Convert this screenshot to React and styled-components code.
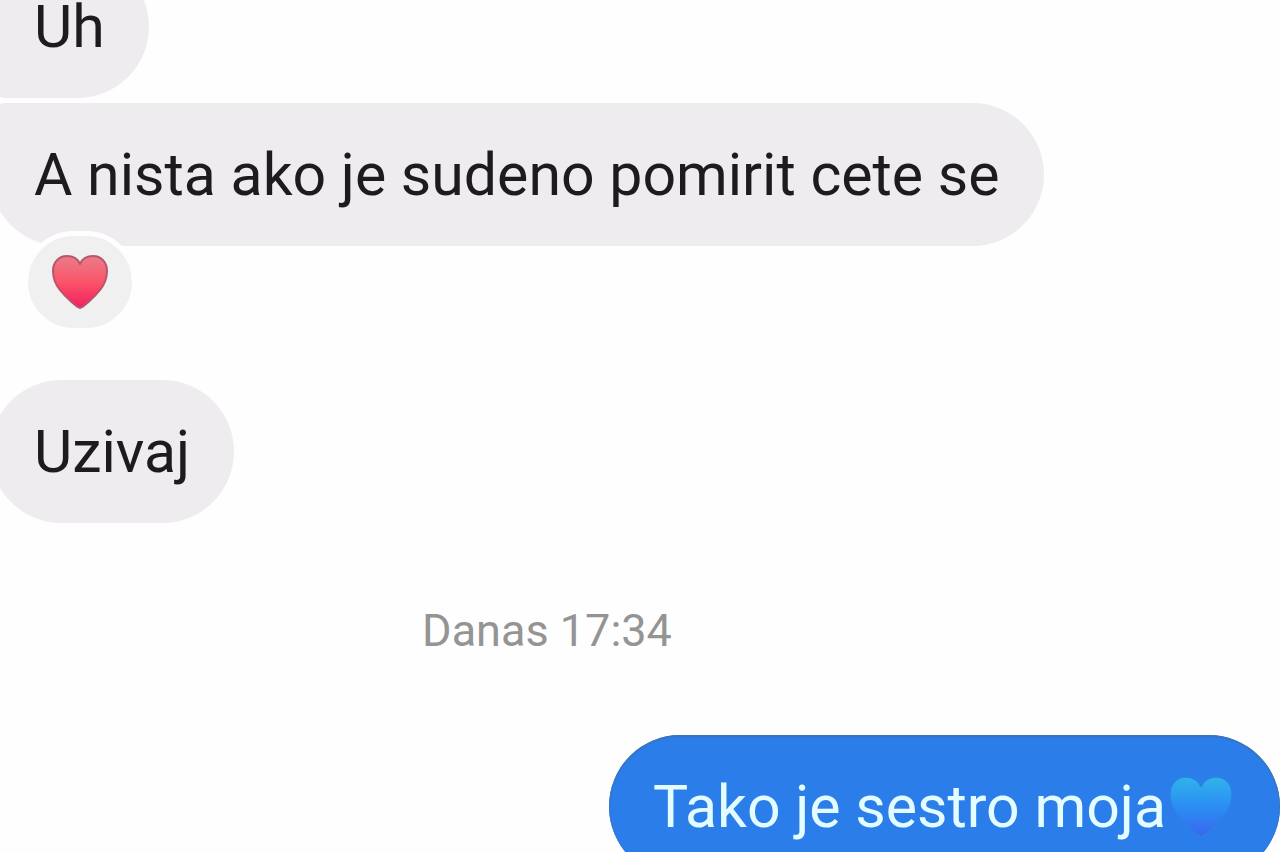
import React from "react";
import styled, { createGlobalStyle } from "styled-components";

const GlobalStyle = createGlobalStyle`
  *, *::before, *::after { box-sizing: border-box; }
  body {
    margin: 0;
    background: #fefefe;
    font-family: Roboto, "Liberation Sans", sans-serif;
  }
`;

const Viewport = styled.main`
  height: 100vh;
  overflow: hidden;
`;

/* The thread is scrolled: its first bubble and its avatar column are partly out of view. */
const Thread = styled.div`
  display: flex;
  flex-direction: column;
  gap: 5px;
  margin: -45px 0 0 -186px;
`;

const Row = styled.div`
  display: flex;
  flex-shrink: 0;
  flex-direction: column;
  align-items: ${({ $sent }) => ($sent ? "flex-end" : "flex-start")};
  padding-left: 176px;
`;

const Bubble = styled.p`
  display: flex;
  align-items: center;
  margin: 0;
  min-height: 143px;
  padding: 0 44px;
  border-radius: ${({ $corners }) => $corners || "72px"};
  background: ${({ $sent }) => ($sent ? "#2b7de9" : "#eeecef")};
  box-shadow: ${({ $sent }) => ($sent ? "inset 0 1px 1px 1px #3a74c0" : "none")};
  color: ${({ $sent }) => ($sent ? "#e2fcff" : "#1d1b1f")};
  font-size: 59px;
  line-height: 72px;
  white-space: nowrap;
`;

const Reaction = styled.button`
  display: flex;
  align-items: center;
  justify-content: center;
  width: 114px;
  height: 102px;
  margin: -15px 0 42px 33px;
  padding: 0;
  border: 5px solid #fefefe;
  border-radius: 52px;
  background: #f1f0f1;
  z-index: 1;
`;

const Timestamp = styled.time`
  align-self: center;
  padding: 76px 0 72px;
  color: #949494;
  font-size: 45px;
  line-height: 54px;
`;

const HeartIcon = styled.svg`
  flex-shrink: 0;
  width: ${({ $size }) => $size}px;
  height: ${({ $size }) => $size}px;
`;

const HEART =
  "M30 56C28 56 16 46 10 38C5 32 3 26 3 19C3 10 9 4 17 4C23 4 28 7 30 12C32 7 37 4 43 4C51 4 57 10 57 19C57 26 55 32 50 38C44 46 32 56 30 56Z";

function Heart({ id, label, size, top, middle, bottom, outline }) {
  return (
    <HeartIcon $size={size} viewBox="0 0 60 60" role="img" aria-label={label}>
      <defs>
        <linearGradient id={id} x1="0" y1="0" x2="0" y2="1">
          <stop offset="0" stopColor={top} />
          <stop offset="0.5" stopColor={middle} />
          <stop offset="1" stopColor={bottom} />
        </linearGradient>
      </defs>
      <path d={HEART} fill={`url(#${id})`} stroke={outline} strokeWidth="2" strokeLinejoin="round" />
    </HeartIcon>
  );
}

export default function App() {
  return (
    <Viewport>
      <GlobalStyle />
      <Thread>
        <Row>
          <Bubble $corners="72px 72px 72px 16px">Uh</Bubble>
        </Row>
        <Row>
          <Bubble $corners="16px 72px 72px 72px">A nista ako je sudeno pomirit cete se</Bubble>
          <Reaction type="button" aria-label="Reactions">
            <Heart
              id="heart-red"
              label="Red heart"
              size={60}
              top="#ea7d87"
              middle="#fb5468"
              bottom="#f0205f"
              outline="#b8556a"
            />
          </Reaction>
        </Row>
        <Row>
          <Bubble>Uzivaj</Bubble>
        </Row>
        <Timestamp>Danas 17:34</Timestamp>
        <Row $sent>
          <Bubble $sent>
            Tako je sestro moja
            <Heart
              id="heart-blue"
              label="Blue heart"
              size={70}
              top="#30b4ea"
              middle="#2b8df4"
              bottom="#3a66ee"
              outline="#2b80e6"
            />
          </Bubble>
        </Row>
      </Thread>
    </Viewport>
  );
}
